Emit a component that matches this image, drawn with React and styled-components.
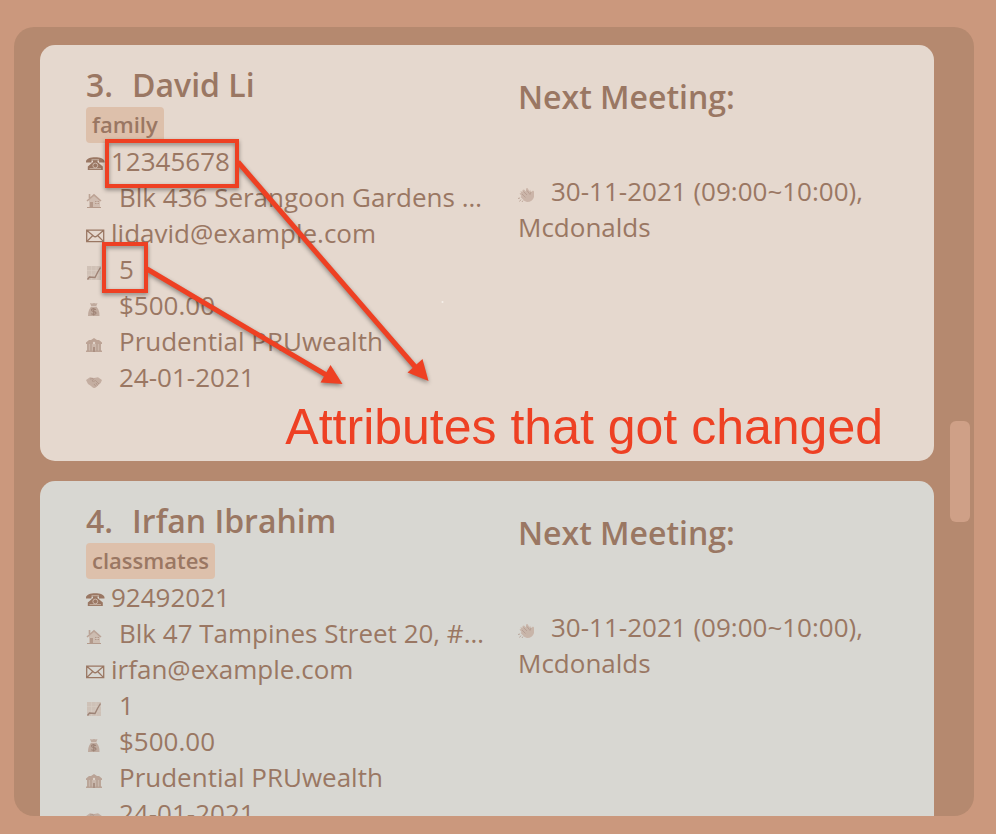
import React from "react";
import styled, { createGlobalStyle } from "styled-components";

const GlobalStyle = createGlobalStyle`
  * { box-sizing: border-box; }
  body {
    margin: 0;
    background: #cb987d;
    color: #9a7763;
    font-family: "Open Sans", "Noto Sans", sans-serif;
  }
`;

const Page = styled.main`
  height: 100vh;
  padding: 27px 22px 18px 14px;
  display: flex;
`;

const Panel = styled.section`
  flex: 1;
  min-width: 0;
  display: flex;
  gap: 16px;
  padding: 0 4px 0 26px;
  border-radius: 20px;
  background: #b5896f;
`;

const CardList = styled.div`
  flex: 1;
  min-width: 0;
  padding-top: 18px;
  display: flex;
  flex-direction: column;
  gap: 20px;
  overflow-y: auto;
  scrollbar-width: none;
`;

const ScrollTrack = styled.div`
  width: 20px;
  padding-top: 2px;
  display: grid;
  grid-template-rows: 4fr 101px 3fr;
`;

const ScrollThumb = styled.div`
  grid-row: 2;
  border-radius: 6px;
  background: #cfa087;
`;

const Card = styled.article`
  position: relative;
  flex-shrink: 0;
  display: grid;
  grid-template-columns: 25fr 24fr;
  column-gap: 32px;
  padding: 18px 32px 66px 46px;
  border-radius: 15px;
  background: ${(p) => (p.$alternate ? "#d8d7d2" : "#e5d8ce")};
`;

const Column = styled.div`
  min-width: 0;
`;

const Name = styled.h2`
  margin: 0;
  display: flex;
  gap: 19px;
  font-size: 32px;
  line-height: 44px;
  font-weight: 600;
`;

const Tag = styled.span`
  display: block;
  width: fit-content;
  padding: 0 6px 2px;
  border-radius: 4px;
  background: #ddc0ab;
  font-size: 22px;
  line-height: 34px;
  font-weight: 600;
`;

const Details = styled.ul`
  margin: 0;
  padding: 0;
  list-style: none;
`;

const Detail = styled.li`
  display: flex;
  align-items: center;
  gap: ${(p) => (p.$wide ? "13px" : "5px")};
  font-size: 26px;
  line-height: 36px;
`;

const Value = styled.span`
  min-width: 0;
  overflow: hidden;
  text-overflow: ellipsis;
  white-space: nowrap;
`;

const Icon = styled.svg`
  width: 20px;
  height: 22px;
  flex-shrink: 0;
  opacity: ${(p) => (p.$faded ? 0.8 : 1)};
`;

const MeetingTitle = styled.h3`
  margin: 12px 0 54px;
  font-size: 32px;
  line-height: 44px;
  font-weight: 600;
`;

const Meeting = styled.p`
  margin: 0;
  font-size: 26px;
  line-height: 36px;

  ${Icon} {
    margin-right: 13px;
    vertical-align: -1px;
  }
`;

const Annotation = styled.div`
  position: absolute;
  inset: 0;
  pointer-events: none;
`;

const Arrows = styled.svg`
  position: absolute;
  top: 0;
  left: 0;
  width: 420px;
  height: 360px;
`;

const Marks = styled.g`
  filter: drop-shadow(0 2px 2px rgba(0, 0, 0, 0.4));
`;

const Note = styled.p`
  position: absolute;
  right: 51px;
  bottom: 5px;
  margin: 0;
  color: #ee4023;
  font-family: "Liberation Sans", Arial, sans-serif;
  font-size: 50px;
  line-height: 58px;
  white-space: nowrap;
`;

const drawings = {
  phone: (
    <>
      <path fill="#9a7763" d="M0 11.500C0 5.800 18.500 5.800 18.500 11.500V12.500H13V10.500H11.500V12L16.800 16.500V20H1.800V16.500L7 12V10.500H5.500V12.500H0Z" />
      <circle cx="9.300" cy="15.500" r="2.400" fill="none" stroke="#d6c4b9" strokeWidth=".8" />
      <path stroke="#d6c4b9" strokeWidth=".7" d="M5.500 9.700H13M3.500 18.600H15" />
    </>
  ),
  home: (
    <>
      <path fill="#cbb7aa" d="M3 14L8 9L14 14V21H3Z" />
      <path fill="none" stroke="#b39788" strokeWidth="1.600" d="M1 15L8 8.800L15 15M3.500 8V12" />
      <path fill="#aa8b7b" d="M4 16H7V21H4ZM9 15H13V18H9ZM1 21H15V22H1Z" />
      <path stroke="#e2d6cd" strokeWidth=".6" d="M9 16.500H13M11 15V18" />
    </>
  ),
  mail: (
    <path fill="none" stroke="#9a7763" strokeWidth="1.300" d="M.7 8.200H17.700V19.700H.7ZM1 8.500L7.500 14Q9.200 15.500 10.900 14L17.400 8.500M1 19.400L6.800 13.500M17.400 19.400L11.600 13.500" />
  ),
  chart: (
    <>
      <path fill="#ccbcb1" d="M1 8H15V22H1Z" />
      <path stroke="#d9cbc1" strokeWidth=".6" d="M1 12.500H15M1 17H15M5.500 8V22M10 8V22" />
      <path fill="none" stroke="#8f6f60" strokeWidth="1.400" d="M1.500 21.500L3.500 19L9 19.500L11.500 14.500L14.500 9.500" />
    </>
  ),
  money: (
    <>
      <path fill="#b89f92" d="M4 9L6 9.600L8 9L10 9.600L11.500 9L10.200 12.300Q14 17 13.500 22H2Q1.700 17 5.300 12.300Z" />
      <path stroke="#e0d2c9" strokeWidth=".8" d="M5 12.500H10.500" />
      <path fill="none" stroke="#8f6f60" strokeWidth="1.100" d="M10 15.500Q5.500 14 5.500 16Q5.500 17.200 7.800 17.600Q10.200 18 9.900 19.500Q9 21 5.300 19.700M7.700 14V21.500" />
    </>
  ),
  bank: (
    <>
      <path fill="#c5b0a3" d="M1 13H15V22H1Z" />
      <path fill="#b39788" d="M0 12.500L3 10H5L8 8L11 10H13L16 12.500V14H0ZM0 20.500H16V22H0Z" />
      <path stroke="#a88c7d" strokeWidth="1.200" d="M2 14V21M5 14V21M11 14V21M14 14V21" />
      <path fill="#9d7f70" d="M7 17H9V22H7Z" />
      <circle cx="8" cy="13" r="1.200" fill="#e0d2c9" />
    </>
  ),
  handshake: (
    <>
      <path fill="#bda497" d="M0 14L4 11.200L8 12L12 11.200L16 14Q15 18 12 19.500L9 22Q7 22.500 5 20L2 18Z" />
      <path fill="none" stroke="#a48778" strokeWidth=".9" d="M4 13L7 12.500M8 12.500L6 15Q8 16 9.500 14.500L13 18M10 17L11.500 19.500M8 18L10 20.500" />
    </>
  ),
  clap: (
    <>
      <path fill="#c5ada0" d="M4.500 10L6 9.500L8 11.500L8 8.500L9.500 8L11.500 11.500L12 9.500L13 12L15 10.500L16 11.500V17Q14.500 22 9 22L6.500 21L2.500 17L3.500 16L1.500 13.500L3 13L2.500 11L4.500 12Z" />
      <path fill="none" stroke="#a98d7f" strokeWidth=".8" d="M5.500 11.500L9 15M9 10.500L12 14.500L13 12M4 14L7.500 17.500M0 18.500L2 18M1.500 21.500L3 19.500M4 22L5 20.500" />
    </>
  ),
};

function Glyph({ name }) {
  return (
    <Icon
      viewBox="0 0 20 22"
      aria-hidden="true"
      $faded={name !== "phone" && name !== "mail"}
    >
      {drawings[name]}
    </Icon>
  );
}

const clients = [
  {
    number: 3,
    name: "David Li",
    tag: "family",
    phone: "12345678",
    address: "Blk 436 Serangoon Gardens Street",
    email: "lidavid@example.com",
    appetite: "5",
  },
  {
    number: 4,
    name: "Irfan Ibrahim",
    tag: "classmates",
    phone: "92492021",
    address: "Blk 47 Tampines Street 20, #17-35",
    email: "irfan@example.com",
    appetite: "1",
  },
];

function ClientCard({ client, alternate, children }) {
  const details = [
    ["phone", client.phone],
    ["home", client.address],
    ["mail", client.email],
    ["chart", client.appetite],
    ["money", "$500.00"],
    ["bank", "Prudential PRUwealth"],
    ["handshake", "24-01-2021"],
  ];
  return (
    <Card $alternate={alternate}>
      <Column>
        <Name>
          <span>{client.number}.</span>
          <span>{client.name}</span>
        </Name>
        <Tag>{client.tag}</Tag>
        <Details>
          {details.map(([icon, value]) => (
            <Detail key={icon} $wide={icon !== "phone" && icon !== "mail"}>
              <Glyph name={icon} />
              <Value>{value}</Value>
            </Detail>
          ))}
        </Details>
      </Column>
      <Column>
        <MeetingTitle>Next Meeting:</MeetingTitle>
        <Meeting>
          <Glyph name="clap" />
          30-11-2021 (09:00~10:00), Mcdonalds
        </Meeting>
      </Column>
      {children}
    </Card>
  );
}

function ChangeAnnotation() {
  return (
    <Annotation>
      <Arrows viewBox="0 0 420 360" aria-hidden="true">
        <Marks>
          <g fill="none" stroke="#ee4023" strokeWidth="4">
            <path d="M67 96H197V141H67ZM64 199H106V246H64Z" />
            <path strokeWidth="5" d="M198 117L377 324M107 224L288 331" />
          </g>
          <path fill="#ee4023" d="M388.500 336L382.500 314L367.500 327.500ZM302.500 339L290.500 320L280.500 337.500Z" />
        </Marks>
        <circle cx="402.500" cy="257" r="1" fill="#f6f0eb" />
      </Arrows>
      <Note>Attributes that got changed</Note>
    </Annotation>
  );
}

export default function App() {
  return (
    <>
      <GlobalStyle />
      <Page>
        <Panel>
          <CardList>
            <ClientCard client={clients[0]}>
              <ChangeAnnotation />
            </ClientCard>
            <ClientCard client={clients[1]} alternate />
          </CardList>
          <ScrollTrack>
            <ScrollThumb />
          </ScrollTrack>
        </Panel>
      </Page>
    </>
  );
}
